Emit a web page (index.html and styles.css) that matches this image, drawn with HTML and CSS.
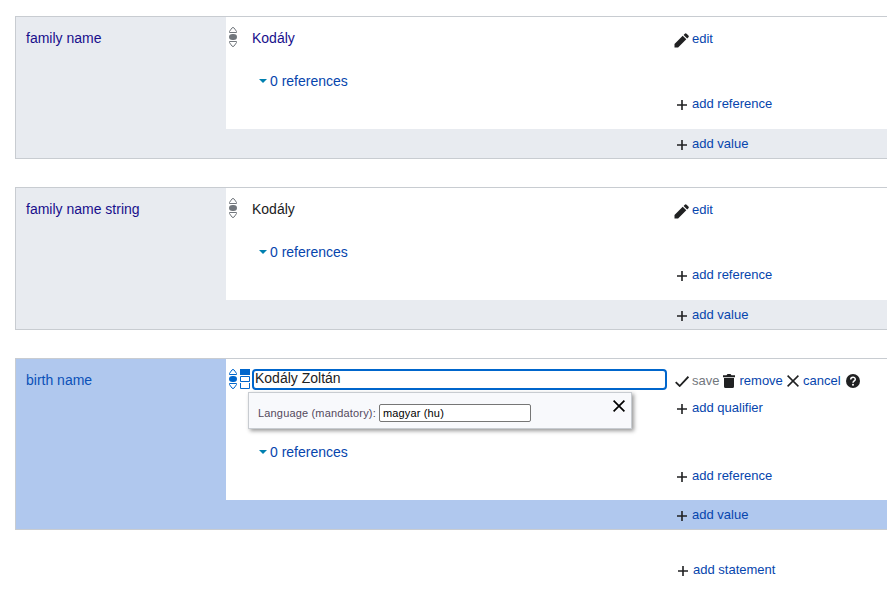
FILE: index.html
```
<!DOCTYPE html>
<html lang="en">
<head>
<meta charset="utf-8">
<title>Statements</title>
<link rel="stylesheet" href="styles.css">
</head>
<body>
<svg class="defs" width="0" height="0" aria-hidden="true">
  <symbol id="plus" viewBox="0 0 10 10"><path d="M0 5h10M5 0v10" fill="none" stroke="#202122" stroke-width="1.6"/></symbol>
  <symbol id="pencil" viewBox="0 0 15 15"><path d="M0.5 14.5v-3.6L8.7 2.7l3.6 3.6-8.2 8.2zM9.6 1.9l1.2-1.2q.9-.8 1.8 0l1.8 1.8q.8.9 0 1.7L13.200 5.400z" fill="#202122"/></symbol>
  <symbol id="rank" viewBox="0 0 8 20"><path d="M.5 5.500V4.400L3 .9q1-.8 2 0l2.500 3.500v1.100zM.5 14.500v1.100L3 19.100q1 .8 2 0l2.500-3.500v-1.100z" fill="#fff" stroke="currentColor"/><rect y="7" width="8" height="6" rx="3.500" ry="3" fill="currentColor"/></symbol>
</svg>
<main class="statements">
  <section class="group">
    <div class="property"><a class="visited">family name</a></div>
    <div class="content">
      <div class="value"><svg class="rank"><use href="#rank"/></svg><a class="visited">Kodály</a></div>
      <a class="references"><i class="caret"></i>0 references</a>
    </div>
    <div class="tools">
      <a class="tool edit"><svg class="pencil"><use href="#pencil"/></svg>edit</a>
      <a class="tool add-reference"><svg class="plus"><use href="#plus"/></svg>add reference</a>
    </div>
    <div class="footer"><a class="tool"><svg class="plus"><use href="#plus"/></svg>add value</a></div>
  </section>
  <section class="group">
    <div class="property"><a class="visited">family name string</a></div>
    <div class="content">
      <div class="value"><svg class="rank"><use href="#rank"/></svg><span>Kodály</span></div>
      <a class="references"><i class="caret"></i>0 references</a>
    </div>
    <div class="tools">
      <a class="tool edit"><svg class="pencil"><use href="#pencil"/></svg>edit</a>
      <a class="tool add-reference"><svg class="plus"><use href="#plus"/></svg>add reference</a>
    </div>
    <div class="footer"><a class="tool"><svg class="plus"><use href="#plus"/></svg>add value</a></div>
  </section>
  <section class="group editing">
    <div class="property"><a>birth name</a></div>
    <div class="content">
      <div class="value">
        <svg class="rank"><use href="#rank"/></svg>
        <svg class="ranks" viewBox="0 0 10 20"><path d="M0 0h10v6H0z" fill="#06c"/><path d="M.5 7.500h9v5h-9zM.5 14v5.500h9V14" fill="none" stroke="#06c"/></svg>
        <div class="field">Kodály Zoltán</div>
        <div class="popup">
          <span class="caption">Language (mandatory):</span><span class="language">magyar (hu)</span>
          <svg class="close" viewBox="0 0 12 12"><path d="M.6.6l10.800 10.800M11.400.6L.6 11.400" stroke="#000" stroke-width="1.700"/></svg>
        </div>
      </div>
      <a class="references"><i class="caret"></i>0 references</a>
    </div>
    <div class="tools">
      <div class="toolbar">
        <a class="tool save"><svg class="check" viewBox="0 0 14 11"><path d="M.7 6.200l4 3.800L13.400.7" fill="none" stroke="#202122" stroke-width="1.800"/></svg>save</a>
        <a class="tool remove"><svg class="trash" viewBox="0 0 12 14"><path d="M0 1.200h3.500L4.500 0h3l1 1.200H12v2H0zM1 4h10v8.500q0 1.500-1.500 1.500h-7Q1 14 1 12.500z" fill="#202122"/></svg>remove</a>
        <a class="tool cancel"><svg class="cross" viewBox="0 0 12 12"><path d="M.6.6l10.800 10.800M11.400.6L.6 11.400" stroke="#202122" stroke-width="1.500"/></svg>cancel</a>
        <svg class="help" viewBox="0 0 14 14"><circle cx="7" cy="7" r="7" fill="#202122"/><path d="M4.700 5.500C4.700 2.500 9.300 2.500 9.300 5.300 9.300 6.900 7 7 7 8.800" fill="none" stroke="#fff" stroke-width="1.500"/><circle cx="7" cy="10.800" r="1" fill="#fff"/></svg>
      </div>
      <a class="tool add-qualifier"><svg class="plus"><use href="#plus"/></svg>add qualifier</a>
      <a class="tool add-reference"><svg class="plus"><use href="#plus"/></svg>add reference</a>
    </div>
    <div class="footer"><a class="tool"><svg class="plus"><use href="#plus"/></svg>add value</a></div>
  </section>
  <a class="tool add-statement"><svg class="plus"><use href="#plus"/></svg>add statement</a>
</main>
</body>
</html>
```
FILE: styles.css
```
* { box-sizing: border-box; }
body {
  margin: 0;
  overflow: hidden;
  background: #fff;
  color: #202122;
  font: 14px/20px "Liberation Sans", Arial, sans-serif;
}
svg { display: block; flex: none; }
.defs { position: absolute; }
a { color: #0645ad; text-decoration: none; }
.visited { color: #180f8c; }
.statements { padding: 16px 0 0 15px; }
.group {
  display: grid;
  grid-template-columns: 210px 446px 1fr;
  grid-template-rows: 112px 29px;
  margin-bottom: 28px;
  border: 1px solid #c8ccd1;
  border-right: 0;
  background: #e8ebf0;
}
.property { grid-row: 1 / 3; padding: 11px 10px; }
.content { padding-top: 11px; background: #fff; }
.value { position: relative; display: flex; height: 20px; padding-left: 3px; }
.rank { width: 8px; height: 20px; margin: -1px 15px 0 0; color: #72777d; }
.references { display: flex; align-items: center; margin: 23px 0 0 33px; }
.caret {
  border: 4px solid transparent;
  border-top-color: #0080b0;
  border-bottom: 0;
  margin-right: 3px;
}
.tools { display: flex; flex-direction: column; padding: 12px 0 0 2px; background: #fff; }
.tool { display: flex; align-items: center; font-size: 13px; white-space: nowrap; }
.plus { width: 10px; height: 10px; margin: 1px 5px 0 3px; }
.pencil { width: 15px; height: 15px; margin: 2px 3px 0 0; }
.tools .add-reference { margin-top: 45px; }
.footer { grid-column: 3; padding: 5px 0 0 2px; }
.editing { grid-template-rows: 141px 29px; margin-bottom: 30px; background: #b0c8ee; }
.editing .rank { margin-right: 3px; color: #06c; }
.editing .property a { color: #0b51b8; }
.ranks { width: 10px; height: 20px; margin: -1px 2px 0 0; }
.field {
  width: 415px;
  height: 21px;
  margin-top: -1px;
  padding-left: 1px;
  border: 2px solid #06c;
  border-radius: 4px;
  line-height: 15px;
}
.popup {
  position: absolute;
  top: 22px;
  left: 22px;
  display: flex;
  width: 384px;
  height: 37px;
  padding: 11px 6px 0 9px;
  border: 1px solid #c8ccd1;
  background: #f8f9fc;
  box-shadow: 2px 2px 4px rgba(0, 0, 0, .4);
  font-size: 11px;
}
.caption { width: 121px; color: #54495d; line-height: 18px; letter-spacing: .17px; white-space: nowrap; }
.language {
  width: 152px;
  height: 18px;
  padding-left: 3px;
  border: 1px solid #767676;
  border-radius: 2px;
  background: #fff;
  color: #000;
  line-height: 17px;
  letter-spacing: .15px;
}
.close { width: 12px; height: 12px; margin: -4px 0 0 auto; }
.editing .references { margin-top: 52px; }
.toolbar { display: flex; align-items: center; }
.save { width: 49px; color: #72777d; }
.check { width: 14px; height: 11px; margin: 1px 3px 0 1px; }
.trash { width: 12px; height: 14px; margin-right: 4.5px; }
.remove { width: 64px; }
.cross { width: 12px; height: 12px; margin-right: 4px; }
.cancel { width: 59px; }
.help { width: 14px; height: 14px; margin-top: -1px; }
.add-qualifier { margin-top: 7px; }
.editing .tools .add-reference { margin-top: 48px; }
.add-statement { padding-left: 660px; }
```
